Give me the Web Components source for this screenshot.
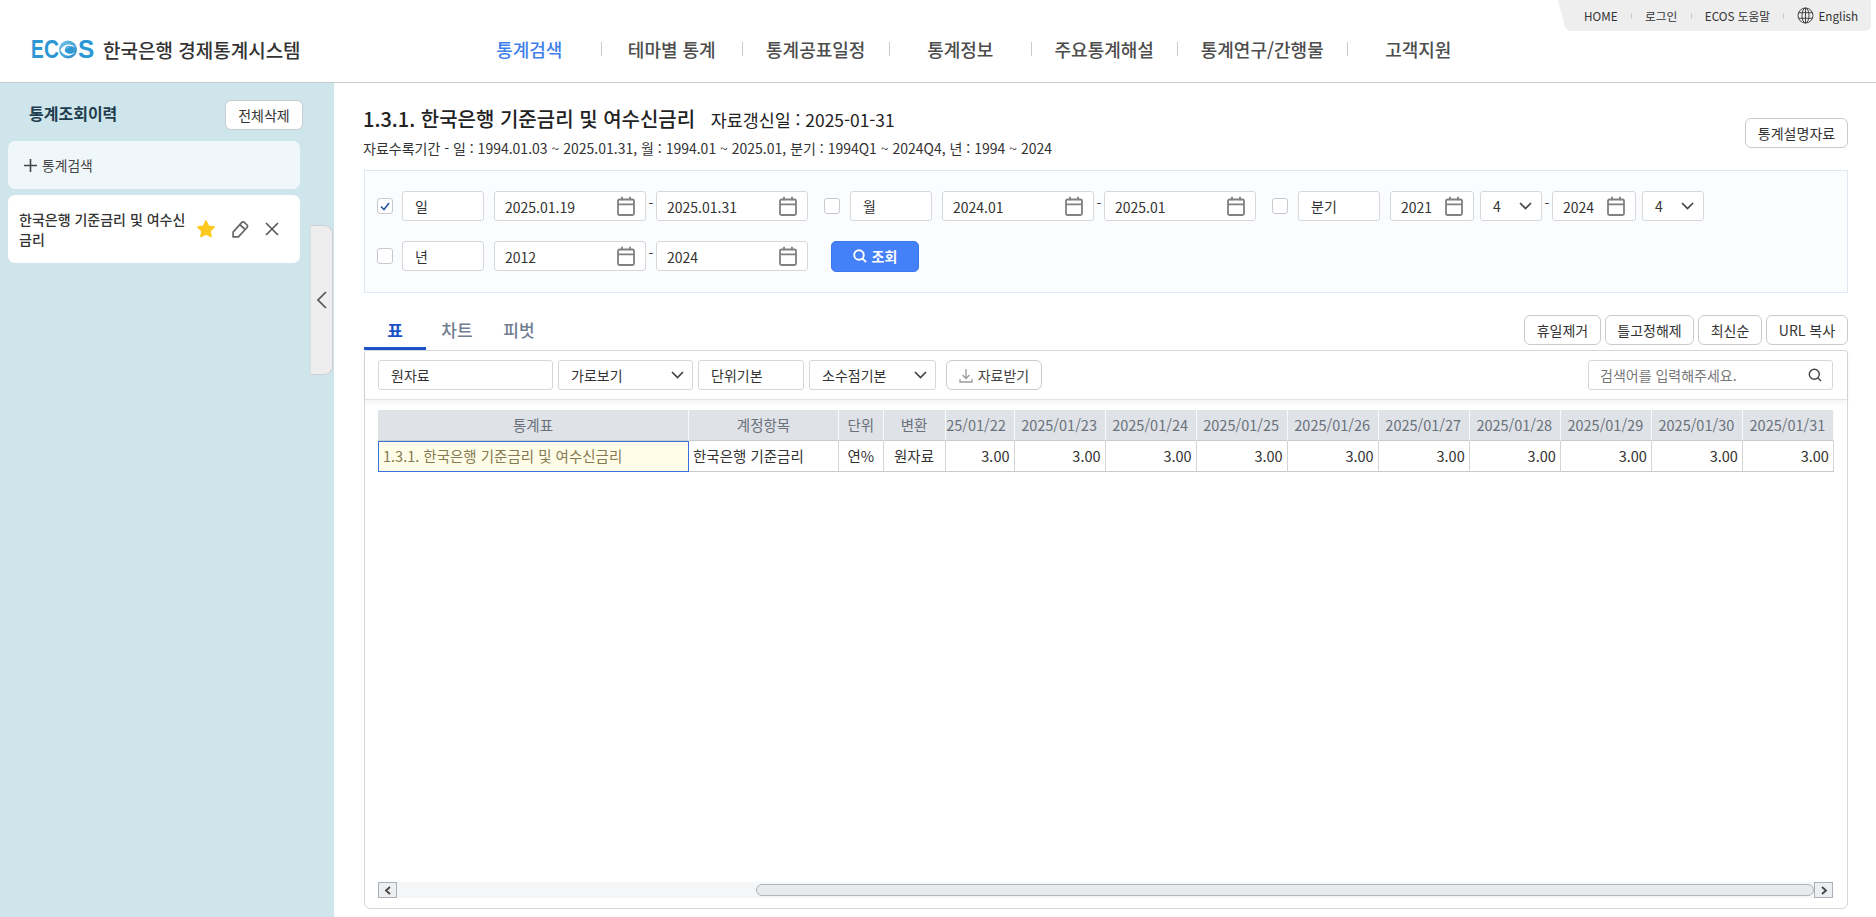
<!DOCTYPE html>
<html lang="ko">
<head>
<meta charset="utf-8">
<title>ECOS 한국은행 경제통계시스템</title>
<style>
  html, body { margin: 0; height: 917px; overflow: hidden; background: #fff; }
  body { font-family: "Noto Sans CJK KR", "Noto Sans", sans-serif; font-size: 14px; color: #333; display: flex; flex-direction: column; }
  #layout { flex: 1; display: flex; min-height: 0; }
</style>
</head>
<body>
  <ecos-header></ecos-header>
  <div id="layout">
    <history-side></history-side>
    <stat-main>
      <period-filter></period-filter>
      <result-tabs></result-tabs>
      <result-panel></result-panel>
    </stat-main>
  </div>

<script>
const ICONS = {
  calendar: `<svg width="18" height="20" viewBox="0 0 18 20" fill="none" stroke="#808080" stroke-width="1.8"><rect x="1" y="3.500" width="16" height="15.500" rx="1.500"/><path d="M1 8.300h16M5 .8v3.500M13 .8v3.500"/></svg>`,
  chevron: `<svg width="13" height="8" viewBox="0 0 13 8" fill="none" stroke="#444" stroke-width="1.7"><path d="M1 1l5.500 5.500L12 1"/></svg>`,
  search: `<svg width="14" height="14" viewBox="0 0 14 14" fill="none" stroke="#444" stroke-width="1.4"><circle cx="6.300" cy="6.300" r="5"/><path d="M10 10l3 3"/></svg>`,
  searchWhite: `<svg width="14" height="14" viewBox="0 0 14 14" fill="none" stroke="#fff" stroke-width="1.9"><circle cx="6" cy="6" r="4.800"/><path d="M9.600 9.600l3.400 3.400"/></svg>`,
  download: `<svg width="14" height="15" viewBox="0 0 14 15" fill="none" stroke="#9a9a9a" stroke-width="1.3"><path d="M7 1v9M3.500 7L7 10.500 10.500 7M1 11v3h12v-3"/></svg>`,
  globe: `<svg width="17" height="17" viewBox="0 0 17 17" fill="none" stroke="#444" stroke-width="1"><circle cx="8.500" cy="8.500" r="7.500"/><ellipse cx="8.500" cy="8.500" rx="3.500" ry="7.500"/><path d="M8.500 1v15M1.500 5.700h14M1.500 11.300h14"/></svg>`,
  star: `<svg width="20" height="20" viewBox="0 0 20 20"><path fill="#fdc921" stroke="#fdc921" stroke-width="1.4" stroke-linejoin="round" d="M10 1.800l2.500 5.300 5.800.8-4.200 4 1 5.800L10 15.100l-5.100 2.600 1-5.800-4.200-4 5.800-.8z"/></svg>`,
  pencil: `<svg width="19" height="19" viewBox="0 0 18 18" fill="none" stroke="#666" stroke-width="1.6" stroke-linejoin="round"><path d="M2 16v-4.500L10 2.500a2 2 0 0 1 2.800 0l2.200 2a2 2 0 0 1 0 2.800L7 16z"/><path d="M8.500 4.500l5 4.500"/></svg>`,
  close: `<svg width="14" height="14" viewBox="0 0 14 14" fill="none" stroke="#555" stroke-width="1.6"><path d="M1 1l12 12M13 1L1 13"/></svg>`,
  back: `<svg width="10" height="18" viewBox="0 0 10 18" fill="none" stroke="#555" stroke-width="1.7"><path d="M9 1L1 9l8 8"/></svg>`
};

// buttons and boxes used everywhere
class UiBtn extends HTMLElement {
  connectedCallback() {
    this.attachShadow({ mode: 'open' }).innerHTML = `
      <style>
        :host { display: inline-flex; align-items: center; justify-content: center; gap: 5px; height: 30px; box-sizing: border-box;
          background: #fff; border: 1px solid #c8ccd0; border-radius: 6px; font-size: 14px; color: #333; white-space: nowrap; }
        :host([primary]) { background: #4480f7; border-color: #3d78ee; color: #fff; font-weight: 700; height: 31px; border-radius: 5px; }
      </style><slot></slot>`;
  }
}
customElements.define('ui-btn', UiBtn);

class UiBox extends HTMLElement {
  connectedCallback() {
    const icon = this.getAttribute('icon');
    this.attachShadow({ mode: 'open' }).innerHTML = `
      <style>
        :host { display: flex; align-items: center; justify-content: space-between; height: 30px; box-sizing: border-box; flex: none;
          padding: 0 10px 0 12px; background: #fff; border: 1px solid #d4d7db; border-radius: 3px; font-size: 14px; color: #333; white-space: nowrap; }
        :host([icon="calendar"]) { padding-left: 10px; }
        :host([icon="calendar"]) span { padding-top: 1px; }
        :host([icon="chevron"]) { padding-right: 9px; }
        :host([placeholder]) { color: #777; padding-left: 11px; }
        svg { display: block; }
      </style><span><slot></slot></span>${icon ? ICONS[icon] : ''}`;
  }
}
customElements.define('ui-box', UiBox);

class NavItem extends HTMLElement {
  connectedCallback() {
    this.attachShadow({ mode: 'open' }).innerHTML = `
      <style>
        :host { display: flex; align-items: center; font-size: 18px; font-weight: 500; color: #4d4d4d; white-space: nowrap; }
        :host([active]) { color: #3f80ea; }
        span { flex: 1; text-align: center; }
        i { width: 1.500px; height: 14px; background: #ccc; }
        :host(:last-child) i { background: transparent; }
      </style><span><slot></slot></span><i></i>`;
  }
}
customElements.define('nav-item', NavItem);

class EcosHeader extends HTMLElement {
  connectedCallback() {
    this.attachShadow({ mode: 'open' }).innerHTML = `
      <style>
        :host { display: block; flex: none; box-sizing: border-box; height: 83px; border-bottom: 1.500px solid #c6cace; }
        .util-row { display: flex; justify-content: flex-end; height: 31px; padding-right: 5px; }
        .util { position: relative; display: flex; align-items: center; width: 303px; padding-left: 16px; box-sizing: border-box;
          background: #eeeeee; border-radius: 0 0 6px 0; font-size: 11.700px; color: #333; white-space: nowrap; }
        .util::before { content: ""; position: absolute; left: -6px; top: 0; bottom: 0; width: 14px; background: #eee; transform: skewX(15deg); border-radius: 0 0 0 5px; }
        .util > * { position: relative; }
        .util i { width: 1px; height: 6px; background: #ccc; margin: 0 13.250px; }
        .util svg { margin-right: 4px; }
        .main-row { display: flex; height: 36px; align-items: center; }
        .logo { width: 458px; box-sizing: border-box; padding-left: 31px; display: flex; align-items: center; flex: none; }
        .mark { display: flex; align-items: center; width: 72px; height: 24px; color: #2b97d4; font: 700 26.500px "Liberation Sans", sans-serif; }
        .mark b { display: block; transform-origin: 0 50%; font-weight: 700; }
        .mark svg { flex: none; }
        .name { font-size: 19px; font-weight: 500; color: #333; white-space: nowrap; }
        nav { display: grid; grid-template-columns: 144px 141px 147px 142px 146px 170px 142px; height: 36px; }
      </style>
      <div class="util-row">
        <div class="util">
          <span>HOME</span><i></i><span>로그인</span><i></i><span>ECOS 도움말</span><i></i>${ICONS.globe}<span>English</span>
        </div>
      </div>
      <div class="main-row">
        <div class="logo">
          <div class="mark">
            <b style="width:13px;transform:scaleX(.72)">E</b><b style="width:15px;transform:scaleX(.78)">C</b>
            <svg width="18" height="19" viewBox="0 0 18 19">
              <defs><linearGradient id="g" x1="0" y1="0" x2="1" y2="1"><stop offset="0" stop-color="#7cc6ea"/><stop offset="1" stop-color="#1c86c8"/></linearGradient></defs>
              <circle cx="9" cy="9.500" r="9" fill="url(#g)"/>
              <path d="M1.500 10C4 4 12 2.500 16.500 7 12 5.500 7 6.500 5.500 10.500 8 14.500 13 15 16.500 11.500 13 17 5 17.500 1.500 10z" fill="#fff"/>
              <circle cx="10" cy="9.500" r="3.800" fill="#2b97d4"/>
              <path d="M7.500 9.500a3.200 3.200 0 0 1 5-2.500 4 4 0 0 0-5 2.500z" fill="#fff"/>
            </svg>
            <b style="width:16px;margin-left:1px;transform:scaleX(.92)">S</b>
          </div>
          <span class="name">한국은행 경제통계시스템</span>
        </div>
        <nav>
          <nav-item active>통계검색</nav-item>
          <nav-item>테마별 통계</nav-item>
          <nav-item>통계공표일정</nav-item>
          <nav-item>통계정보</nav-item>
          <nav-item>주요통계해설</nav-item>
          <nav-item>통계연구/간행물</nav-item>
          <nav-item>고객지원</nav-item>
        </nav>
      </div>`;
  }
}
customElements.define('ecos-header', EcosHeader);

class HistorySide extends HTMLElement {
  connectedCallback() {
    this.attachShadow({ mode: 'open' }).innerHTML = `
      <style>
        :host { display: block; position: relative; flex: none; width: 334px; box-sizing: border-box; padding: 17px 34px 0 8px; background: #cfe5ec; }
        .top { display: flex; align-items: center; justify-content: space-between; margin-right: -3px; padding-left: 21px; height: 30px; }
        h2 { margin: -4px 0 0; font-size: 16px; font-weight: 700; color: #1d3d4d; }
        ui-btn { width: 78px; }
        .add { display: flex; align-items: center; gap: 5px; margin-top: 11px; height: 48px; padding-left: 16px; background: #eff7fa; border-radius: 7px; font-size: 13.800px; color: #444; }
        .add svg { display: block; }
        .item { display: flex; align-items: center; margin-top: 6px; height: 68px; padding-left: 11px; background: #fff; border-radius: 7px; font-size: 14px; font-weight: 500; line-height: 20px; color: #333; }
        .item p { margin: -1px 0 0; width: 167px; flex: none; }
        .icons { display: flex; align-items: center; margin-left: 10px; }
        .icons svg { display: block; }
        .toggle { position: absolute; left: 310px; top: 142px; width: 23px; height: 150px; box-sizing: border-box; display: flex; align-items: center; justify-content: center;
          background: #eee; border: 1px solid #cfcfcf; border-left-color: #ddd; border-radius: 0 9px 9px 0; }
      </style>
      <div class="top"><h2>통계조회이력</h2><ui-btn>전체삭제</ui-btn></div>
      <div class="add">
        <svg width="13" height="13" viewBox="0 0 13 13" stroke="#444" stroke-width="1.600"><path d="M6.500 0v13M0 6.500h13"/></svg>
        <span>통계검색</span>
      </div>
      <div class="item">
        <p>한국은행 기준금리 및 여수신금리</p>
        <div class="icons">
          ${ICONS.star}<span style="width:15px"></span>${ICONS.pencil}<span style="width:15px"></span>${ICONS.close}
        </div>
      </div>
      <div class="toggle">${ICONS.back}</div>`;
  }
}
customElements.define('history-side', HistorySide);

class StatMain extends HTMLElement {
  connectedCallback() {
    this.attachShadow({ mode: 'open' }).innerHTML = `
      <style>
        :host { display: flex; flex-direction: column; flex: 1; min-width: 0; box-sizing: border-box; padding: 0 28px 8px 30px; }
        .head { display: flex; justify-content: space-between; align-items: flex-start; height: 87px; margin-left: -1px; box-sizing: border-box; padding-top: 22px; }
        h1 { margin: 0; font-size: 20px; line-height: 28px; font-weight: 500; color: #222; white-space: nowrap; }
        h1 small { font-size: 17.400px; font-weight: 400; margin-left: 10px; }
        p { margin: 4px 0 0; font-size: 14px; line-height: 21px; color: #333; white-space: nowrap; }
        ui-btn { width: 103px; margin-top: 13px; }
      </style>
      <div class="head">
        <div>
          <h1>1.3.1. 한국은행 기준금리 및 여수신금리 <small>자료갱신일 : 2025-01-31</small></h1>
          <p>자료수록기간 - 일 : 1994.01.03 ~ 2025.01.31, 월 : 1994.01 ~ 2025.01, 분기 : 1994Q1 ~ 2024Q4, 년 : 1994 ~ 2024</p>
        </div>
        <ui-btn>통계설명자료</ui-btn>
      </div>
      <slot></slot>`;
  }
}
customElements.define('stat-main', StatMain);

class PeriodGroup extends HTMLElement {
  connectedCallback() {
    const a = n => this.getAttribute(n);
    const dw = a('date-w');
    const part = (v, q) => `<ui-box icon="calendar" style="width:${dw}px">${v}</ui-box>` +
      (q ? `<ui-box icon="chevron" style="width:62px;margin-left:6px">4</ui-box>` : '');
    const q = this.hasAttribute('quarter');
    this.attachShadow({ mode: 'open' }).innerHTML = `
      <style>
        :host { display: flex; align-items: center; flex: none; }
        .cb { width: 16px; height: 16px; box-sizing: border-box; flex: none; margin-right: ${a('cb-gap') || 9}px; background: #fff; border: 1px solid #c6cad0; border-radius: 3px; display: flex; align-items: center; justify-content: center; }
        .label { margin-right: 10px; }
        .dash { width: 10px; flex: none; text-align: center; line-height: 1; margin-top: -7px; font-size: 14px; color: #444; }
      </style>
      <div class="cb">${a('checked') !== null ? `<svg width="10" height="9" viewBox="0 0 10 9" fill="none" stroke="#2b50a8" stroke-width="1.600"><path d="M1 4.500l3 3 5-6.500"/></svg>` : ''}</div>
      <ui-box class="label" style="width:82px">${a('label')}</ui-box>
      ${part(a('from'), q)}
      <div class="dash">-</div>
      ${part(a('to'), q)}`;
  }
}
customElements.define('period-group', PeriodGroup);

class PeriodFilter extends HTMLElement {
  connectedCallback() {
    this.attachShadow({ mode: 'open' }).innerHTML = `
      <style>
        :host { display: flex; flex-direction: column; gap: 20px; flex: none; height: 123px; box-sizing: border-box; padding: 20px 12px; background: #fafcfe; border: 1px solid #dfe8f2; }
        .row { display: flex; align-items: center; height: 30px; }
        ui-btn { width: 88px; margin-left: 23px; }
        ui-btn svg { display: block; }
      </style>
      <div class="row">
        <period-group checked label="일" from="2025.01.19" to="2025.01.31" date-w="152"></period-group>
        <period-group style="margin-left:16px" cb-gap="10" label="월" from="2024.01" to="2025.01" date-w="152"></period-group>
        <period-group style="margin-left:16px" cb-gap="10" label="분기" from="2021" to="2024" date-w="84" quarter></period-group>
      </div>
      <div class="row">
        <period-group label="년" from="2012" to="2024" date-w="152"></period-group>
        <ui-btn primary>${ICONS.searchWhite}조회</ui-btn>
      </div>`;
  }
}
customElements.define('period-filter', PeriodFilter);

class ResultTabs extends HTMLElement {
  connectedCallback() {
    this.attachShadow({ mode: 'open' }).innerHTML = `
      <style>
        :host { display: flex; justify-content: space-between; flex: none; height: 35px; margin-top: 22px; }
        .tabs { display: flex; }
        .tabs div { width: 62px; height: 35px; box-sizing: border-box; text-align: center; line-height: 30px; font-size: 17px; font-weight: 500; color: #717d90; }
        .tabs .on { color: #1c52c7; font-weight: 700; border-bottom: 3px solid #1c52c7; }
        .btns { display: flex; gap: 4px; height: 30px; }
      </style>
      <div class="tabs"><div class="on">표</div><div>차트</div><div>피벗</div></div>
      <div class="btns">
        <ui-btn style="width:77px">휴일제거</ui-btn>
        <ui-btn style="width:89px">틀고정해제</ui-btn>
        <ui-btn style="width:64px">최신순</ui-btn>
        <ui-btn style="width:82px">URL 복사</ui-btn>
      </div>`;
  }
}
customElements.define('result-tabs', ResultTabs);

class DataGrid extends HTMLElement {
  connectedCallback() {
    const dates = ['22','23','24','25','26','27','28','29','30','31'];
    const head = dates.map(d => `<div class="h d"><span>2025/01/${d}</span></div>`).join('');
    const cells = dates.map(() => `<div class="c n">3.00</div>`).join('');
    this.attachShadow({ mode: 'open' }).innerHTML = `
      <style>
        :host { display: grid; flex: none; grid-template-columns: 311px 150px 44.500px 62px 69px repeat(9, 91.050px); grid-auto-rows: 31px; margin: 10px 13px 0 13px; font-size: 14.500px; white-space: nowrap; }
        .h, .c { display: flex; align-items: center; justify-content: center; overflow: hidden; box-sizing: border-box; padding-bottom: 2px; }
        .h { background: #dfe2e7; color: #6a717b; border-right: 1px solid #fafafa; border-bottom: 1px solid #c9ccd0; }
        .h.d { justify-content: flex-end; }
        .h.d span { flex: none; width: 91px; text-align: center; }
        .c { color: #333; border-right: 1px solid #d4d4d4; border-bottom: 1px solid #c9c9c9; }
        .c.first { justify-content: flex-start; padding-left: 4px; background: #fffde8; color: #857a52; border: 1.500px solid #3a73e0; }
        .c.l { justify-content: flex-start; padding-left: 4px; }
        .c.n { justify-content: flex-end; padding-right: 4px; }
      </style>
      <div class="h">통계표</div><div class="h">계정항목</div><div class="h">단위</div><div class="h">변환</div>${head}
      <div class="c first">1.3.1. 한국은행 기준금리 및 여수신금리</div><div class="c l">한국은행 기준금리</div><div class="c">연%</div><div class="c">원자료</div>${cells}`;
  }
}
customElements.define('data-grid', DataGrid);

class ResultPanel extends HTMLElement {
  connectedCallback() {
    const arrow = d => `<svg width="8" height="9" viewBox="0 0 8 9" fill="none" stroke="#444" stroke-width="1.800"><path d="${d}"/></svg>`;
    this.attachShadow({ mode: 'open' }).innerHTML = `
      <style>
        :host { display: flex; flex-direction: column; flex: 1; min-height: 0; box-sizing: border-box; border: 1.500px solid #d5d7da; border-top-width: 1px; border-radius: 3px 3px 6px 6px; }
        .bar { display: flex; align-items: center; gap: 5px; flex: none; height: 48px; padding: 0 14px 0 13px; border-bottom: 1px solid #e2e2e2; box-shadow: 0 3px 6px rgba(0,0,0,.05); }
        .grow { flex: 1; }
        .bar ui-btn { width: 96px; margin-left: 5px; color: #444; }
        .bar ui-btn svg { display: block; }
        .scroll { display: flex; align-items: center; height: 16px; margin: auto 14px 10px 13px; background: #f5f6f8; }
        .scroll .btn { display: flex; align-items: center; justify-content: center; width: 19px; height: 16px; box-sizing: border-box; flex: none; background: #eceef0; border: 1px solid #aab0b8; }
        .scroll .gap { width: 359px; flex: none; }
        .scroll .thumb { flex: 1; height: 12px; box-sizing: border-box; background: #e9eaec; border: 1px solid #aeb4bc; border-radius: 6px; }
      </style>
      <div class="bar">
        <ui-box style="width:175px">원자료</ui-box>
        <ui-box icon="chevron" style="width:135px;padding-right:8px">가로보기</ui-box>
        <ui-box style="width:106px">단위기본</ui-box>
        <ui-box icon="chevron" style="width:127px;padding-right:8px">소수점기본</ui-box>
        <ui-btn>${ICONS.download}자료받기</ui-btn>
        <div class="grow"></div>
        <ui-box placeholder icon="search" style="width:245px">검색어를 입력해주세요.</ui-box>
      </div>
      <data-grid></data-grid>
      <div class="scroll">
        <div class="btn">${arrow('M6 1L2 4.500 6 8')}</div>
        <div class="gap"></div>
        <div class="thumb"></div>
        <div class="btn">${arrow('M2 1l4 3.500L2 8')}</div>
      </div>`;
  }
}
customElements.define('result-panel', ResultPanel);
</script>
</body>
</html>
